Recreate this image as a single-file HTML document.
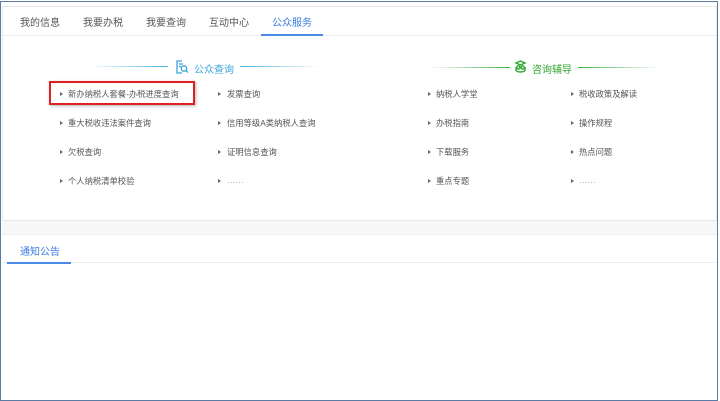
<!DOCTYPE html>
<html><head><meta charset="utf-8"><style>
*{margin:0;padding:0;box-sizing:border-box}
body{width:720px;height:401px;background:#fff;position:relative;overflow:hidden;font-family:"Liberation Sans","Noto Sans CJK SC",sans-serif}
.a{position:absolute}
.frame{left:0;top:1px;width:718px;height:400px;border:1px solid #5a7ba6}
.card1{left:2px;top:6px;width:715px;height:215px;border:1px solid #e8e8e8;background:#fff}
.gap{left:2px;top:221px;width:715px;height:13px;background:#f7f7f7}
.card2{left:2px;top:234px;width:715px;height:166px;border-top:1px solid #eee;background:#fff}
.tab{top:14px;font-size:10px;color:#555}
.item{font-size:8.3px;color:#555;white-space:nowrap}
.tri{width:0;height:0;border-left:3px solid #666;border-top:2.5px solid transparent;border-bottom:2.5px solid transparent}
</style></head><body>
<div class="a card1"></div>
<div class="a gap"></div>
<div class="a card2"></div>
<div class="a frame"></div>

<div class="a tab" style="left:20px">我的信息</div>
<div class="a tab" style="left:83px">我要办税</div>
<div class="a tab" style="left:146px">我要查询</div>
<div class="a tab" style="left:209px">互动中心</div>
<div class="a tab" style="left:272px;color:#3a7be0">公众服务</div>
<div class="a" style="left:3px;top:35px;width:713px;height:1px;background:#ececec"></div>
<div class="a" style="left:261px;top:34px;width:62px;height:2px;background:#4a8ae6"></div>

<div class="a" style="left:90px;top:66px;width:78px;height:1px;background:linear-gradient(90deg,rgba(60,160,220,0),#4ab0e0)"></div>
<div class="a" style="left:240px;top:66px;width:80px;height:1px;background:linear-gradient(90deg,#4ab0e0,rgba(60,160,220,0))"></div>
<svg class="a" style="left:175px;top:60px" width="14" height="14" viewBox="0 0 14 14" fill="none" stroke="#3aa5dc" stroke-width="1.3"><path d="M7 1H2v12h5"/><path d="M4 4h4M4 6.5h2"/><circle cx="9" cy="8.5" r="2.7"/><path d="M11 10.5l2 2"/></svg>
<div class="a" style="left:194px;top:61px;font-size:10px;color:#3aa5dc">公众查询</div>

<div class="a" style="left:430px;top:67px;width:80px;height:1px;background:linear-gradient(90deg,rgba(60,180,60,0),#3db03d)"></div>
<div class="a" style="left:578px;top:67px;width:82px;height:1px;background:linear-gradient(90deg,#3db03d,rgba(60,180,60,0))"></div>
<svg class="a" style="left:514px;top:60px" width="13" height="14" viewBox="0 0 13 14" fill="none" stroke="#2ea52e" stroke-width="1.4"><path d="M2 3l4.5-2 4.5 2-4.5 2z"/><circle cx="4.3" cy="7.5" r="1.6"/><circle cx="8.7" cy="7.5" r="1.6"/><path d="M2 7v3.5c1.5 2 7.5 2 9 0V7"/></svg>
<div class="a" style="left:532px;top:61px;font-size:10px;color:#2ea52e">咨询辅导</div>

<div class="a" style="left:49px;top:81px;width:146px;height:24px;border:2px solid #e02020;box-shadow:1px 1px 3px rgba(0,0,0,.3)"></div>

<div class="a tri" style="left:60px;top:92px"></div><div class="a item" style="left:68px;top:88px">新办纳税人套餐-办税进度查询</div>
<div class="a tri" style="left:218px;top:92px"></div><div class="a item" style="left:227px;top:88px">发票查询</div>
<div class="a tri" style="left:428px;top:92px"></div><div class="a item" style="left:436px;top:88px">纳税人学堂</div>
<div class="a tri" style="left:571px;top:92px"></div><div class="a item" style="left:579px;top:88px">税收政策及解读</div>

<div class="a tri" style="left:60px;top:121px"></div><div class="a item" style="left:68px;top:117px">重大税收违法案件查询</div>
<div class="a tri" style="left:218px;top:121px"></div><div class="a item" style="left:227px;top:117px">信用等级A类纳税人查询</div>
<div class="a tri" style="left:428px;top:121px"></div><div class="a item" style="left:436px;top:117px">办税指南</div>
<div class="a tri" style="left:571px;top:121px"></div><div class="a item" style="left:579px;top:117px">操作规程</div>

<div class="a tri" style="left:60px;top:150px"></div><div class="a item" style="left:68px;top:146px">欠税查询</div>
<div class="a tri" style="left:218px;top:150px"></div><div class="a item" style="left:227px;top:146px">证明信息查询</div>
<div class="a tri" style="left:428px;top:150px"></div><div class="a item" style="left:436px;top:146px">下载服务</div>
<div class="a tri" style="left:571px;top:150px"></div><div class="a item" style="left:579px;top:146px">热点问题</div>

<div class="a tri" style="left:60px;top:179px"></div><div class="a item" style="left:68px;top:175px">个人纳税清单校验</div>
<div class="a tri" style="left:218px;top:179px"></div><div class="a item" style="left:227px;top:175px;color:#999">……</div>
<div class="a tri" style="left:428px;top:179px"></div><div class="a item" style="left:436px;top:175px">重点专题</div>
<div class="a tri" style="left:571px;top:179px"></div><div class="a item" style="left:579px;top:175px;color:#999">……</div>

<div class="a" style="left:20px;top:243px;font-size:10px;color:#3a7be0">通知公告</div>
<div class="a" style="left:2px;top:262px;width:715px;height:1px;background:#eee"></div>
<div class="a" style="left:7px;top:262px;width:64px;height:2px;background:#4a8ae6"></div>
</body></html>
